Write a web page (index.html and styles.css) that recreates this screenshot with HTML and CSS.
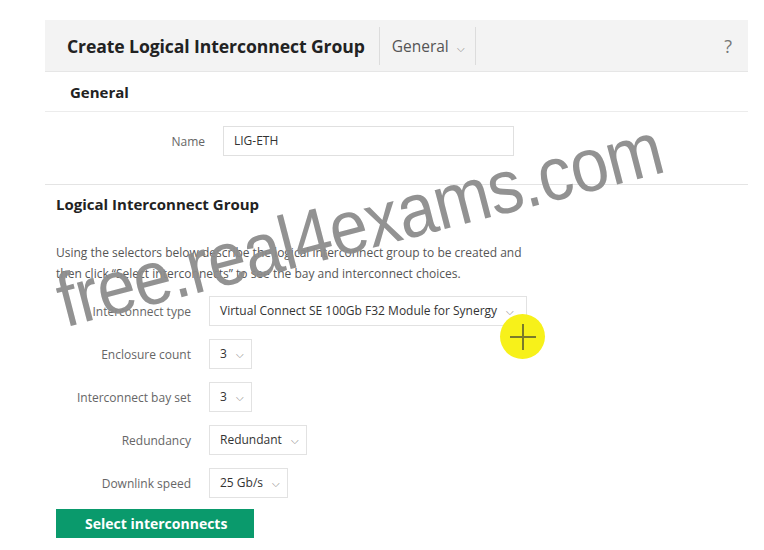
FILE: index.html
```html
<!DOCTYPE html>
<html lang="en">
<head>
    <meta charset="UTF-8">
    <title>Create Logical Interconnect Group</title>
    <link rel="stylesheet" href="styles.css">
</head>
<body>
    <div class="page">
        <header class="top-bar">
            <h1 class="page-title">Create Logical Interconnect Group</h1>
            <div class="view-select">General <span class="chev">&#x2335;</span></div>
            <div class="help">?</div>
        </header>

        <div class="section-head">General</div>

        <div class="name-row">
            <label class="name-label">Name</label>
            <div class="text-input">LIG-ETH</div>
        </div>

        <section class="lig">
            <h2>Logical Interconnect Group</h2>
            <p class="intro">
                Using the selectors below describe the logical interconnect group to be created and<br>
                then click “Select interconnects” to see the bay and interconnect choices.
            </p>

            <div class="form-grid">
                <label>Interconnect type</label>
                <div class="select wide">Virtual Connect SE 100Gb F32 Module for Synergy <span class="chev">&#x2335;</span></div>

                <label>Enclosure count</label>
                <div class="select">3 <span class="chev">&#x2335;</span></div>

                <label>Interconnect bay set</label>
                <div class="select">3 <span class="chev">&#x2335;</span></div>

                <label>Redundancy</label>
                <div class="select">Redundant <span class="chev">&#x2335;</span></div>

                <label>Downlink speed</label>
                <div class="select">25 Gb/s <span class="chev">&#x2335;</span></div>
            </div>

            <button class="primary">Select interconnects</button>
        </section>
    </div>

    <div class="cursor">
        <svg width="30" height="30" viewBox="0 0 30 30">
            <path d="M15 2 V28 M2 15 H28" stroke="#7a7a2a" stroke-width="2"/>
        </svg>
    </div>

    <div class="watermark">free.real4exams.com</div>
</body>
</html>
```

FILE: styles.css
```css
* {
    margin: 0;
    padding: 0;
    box-sizing: border-box;
}

body {
    font-family: 'Open Sans', 'Liberation Sans', sans-serif;
    background: #ffffff;
    color: #333;
    width: 764px;
    height: 550px;
    overflow: hidden;
    position: relative;
}

.page {
    margin-left: 45px;
    margin-top: 20px;
    width: 703px;
}

.top-bar {
    display: flex;
    align-items: center;
    height: 52px;
    background: #f3f3f3;
    border-bottom: 1px solid #e6e6e6;
}

.page-title {
    font-size: 17.6px;
    font-weight: 700;
    color: #222;
    padding: 0 14px 0 22px;
    letter-spacing: -0.1px;
    border-right: 1px solid #dcdcdc;
    height: 38px;
    line-height: 38px;
}

.view-select {
    font-size: 15.5px;
    color: #555;
    padding: 0 10px 0 12px;
    height: 38px;
    line-height: 38px;
    border-right: 1px solid #dcdcdc;
}

.chev {
    font-size: 10px;
    color: #888;
    margin-left: 4px;
}

.help {
    margin-left: auto;
    margin-right: 16px;
    font-size: 18px;
    color: #777;
}

.section-head {
    font-size: 15px;
    font-weight: 700;
    color: #222;
    padding: 10px 25px 9px;
    border-bottom: 1px solid #ececec;
}

.name-row {
    display: flex;
    align-items: center;
    padding: 14px 0 28px;
    border-bottom: 1px solid #e4e4e4;
}

.name-label {
    width: 160px;
    text-align: right;
    font-size: 12px;
    color: #666;
    margin-right: 18px;
}

.text-input {
    width: 291px;
    height: 30px;
    border: 1px solid #e0e0e0;
    font-size: 12px;
    color: #333;
    line-height: 28px;
    padding-left: 10px;
}

.lig {
    padding: 9px 0 0 11px;
}

.lig h2 {
    font-size: 15px;
    font-weight: 700;
    color: #222;
}

.intro {
    font-size: 12px;
    color: #555;
    line-height: 21px;
    margin-top: 28px;
}

.form-grid {
    display: grid;
    grid-template-columns: 135px auto;
    column-gap: 18px;
    row-gap: 13px;
    align-items: center;
    justify-items: start;
    margin-top: 12px;
}

.form-grid label {
    justify-self: end;
    font-size: 12px;
    color: #666;
}

.select {
    height: 30px;
    border: 1px solid #e2e2e2;
    font-size: 12px;
    color: #333;
    line-height: 28px;
    padding: 0 7px 0 10px;
    white-space: nowrap;
}

.select .chev {
    margin-left: 6px;
}

.select.wide {
    width: 318px;
}

.primary {
    margin-top: 11px;
    width: 198px;
    height: 29px;
    background: #0a9a6c;
    border: none;
    color: #fff;
    font-family: inherit;
    font-size: 14px;
    font-weight: 700;
    text-align: left;
    padding-left: 29px;
}

.cursor {
    position: absolute;
    left: 500px;
    top: 314px;
    width: 45px;
    height: 45px;
    border-radius: 50%;
    background: #f7f11a;
    display: flex;
    align-items: center;
    justify-content: center;
}

.watermark {
    position: absolute;
    left: 68px;
    top: 263px;
    font-family: 'Liberation Sans', sans-serif;
    font-size: 76px;
    line-height: 1;
    color: rgba(140, 140, 140, 0.95);
    transform: rotate(-14.5deg) scaleX(0.9);
    transform-origin: left bottom;
    white-space: nowrap;
    letter-spacing: -1px;
    pointer-events: none;
}
```
